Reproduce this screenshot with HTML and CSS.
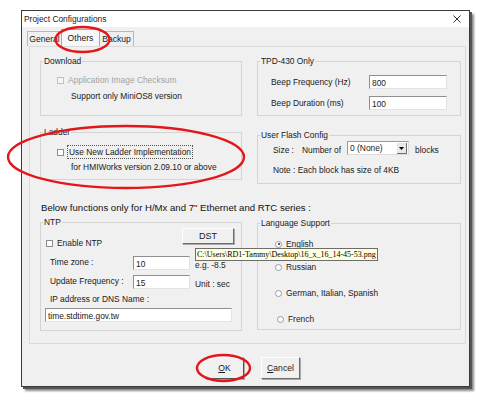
FILE: index.html
```html
<!DOCTYPE html>
<html>
<head>
<link rel="stylesheet" href="styles.css">
</head>
<body>

<div class="window">
    <div class="titlebar">
        <span>Project Configurations</span>
        <svg class="close" width="8" height="8" viewBox="0 0 8 8"><path d="M0.5 0.5 L7.5 7.5 M7.5 0.5 L0.5 7.5" stroke="#333" stroke-width="1"/></svg>
    </div>

    <div class="tabs">
        <div class="tab t-general">General</div>
        <div class="tab t-others active">Others</div>
        <div class="tab t-backup">Backup</div>
    </div>

    <div class="panel">
        <div class="row">
            <fieldset class="group download">
                <legend>Download</legend>
                <div class="check disabled"><span class="box"></span>Application Image Checksum</div>
                <div class="note">Support only MiniOS8 version</div>
            </fieldset>
            <fieldset class="group tpd">
                <legend>TPD-430 Only</legend>
                <div class="field"><span class="lbl">Beep Frequency (Hz)</span><span class="input w78">800</span></div>
                <div class="field second"><span class="lbl">Beep Duration (ms)</span><span class="input w78">100</span></div>
            </fieldset>
        </div>

        <div class="row row2">
            <fieldset class="group ladder">
                <legend>Ladder</legend>
                <div class="check"><span class="box"></span><span class="focus">Use New Ladder Implementation</span></div>
                <div class="note">for HMIWorks version 2.09.10 or above</div>
            </fieldset>
            <fieldset class="group flash">
                <legend>User Flash Config</legend>
                <div class="size-row">
                    <span>Size :</span>
                    <span class="num-of">Number of</span>
                    <span class="select">0 (None)<span class="drop"><svg width="5" height="3" viewBox="0 0 5 3"><path d="M0 0 H5 L2.5 3 Z" fill="#000"/></svg></span></span>
                    <span class="blocks">blocks</span>
                </div>
                <div class="note">Note : Each block has size of 4KB</div>
            </fieldset>
        </div>

        <p class="headline">Below functions only for H/Mx and 7" Ethernet and RTC series :</p>

        <div class="row">
            <fieldset class="group ntp">
                <legend>NTP</legend>
                <div class="ntp-top">
                    <div class="check"><span class="box"></span>Enable NTP</div>
                    <span class="btn dst">DST</span>
                </div>
                <div class="ntp-field"><span class="lbl">Time zone :</span><span class="input w57">10</span><span class="hint">e.g. -8.5</span></div>
                <div class="ntp-field"><span class="lbl">Update Frequency :</span><span class="input w57">15</span><span class="hint">Unit : sec</span></div>
                <div class="ip-label">IP address or DNS Name :</div>
                <span class="input ip">time.stdtime.gov.tw</span>
                <div class="tooltip">C:\Users\RD1-Tammy\Desktop\16_x_16_14-45-53.png</div>
            </fieldset>
            <fieldset class="group lang">
                <legend>Language Support</legend>
                <div class="radio r1"><span class="dot on"></span>English</div>
                <div class="radio r2"><span class="dot"></span>Russian</div>
                <div class="radio r3"><span class="dot"></span>German, Italian, Spanish</div>
                <div class="radio r4"><span class="dot"></span>French</div>
            </fieldset>
        </div>
    </div>

    <div class="buttons">
        <span class="btn ok"><u>O</u>K</span>
        <span class="btn"><u>C</u>ancel</span>
    </div>
</div>

<!-- red marker rings drawn over the dialog -->
<svg class="marks" width="484" height="400" viewBox="0 0 484 400">
    <ellipse cx="82.5" cy="39.5" rx="27" ry="12.5" />
    <ellipse cx="126" cy="157" rx="118" ry="31" />
    <ellipse cx="223.5" cy="368" rx="26.5" ry="13" />
</svg>

</body>
</html>
```

FILE: styles.css
```css
body {
    margin: 0;
    position: relative;
    width: 484px;
    height: 400px;
    background-color: #fff;
    font-family: "Liberation Sans", Arial, sans-serif;
    font-size: 8.4px;
    line-height: 10px;
    color: #1a1a1a;
    overflow: hidden;
}

.window {
    box-sizing: border-box;
    width: 449px;
    height: 377px;
    margin: 10px 0 0 21px;
    border: 1px solid #3a3a3a;
    background-color: #f0f0f0;
    box-shadow: 2px 2px 0 #555, 4px 4px 2px #8a8a8a;
    display: flex;
    flex-direction: column;
}

.titlebar {
    height: 16px;
    background-color: #fff;
    display: flex;
    align-items: center;
    justify-content: space-between;
    padding: 0 8px 0 2px;
}

.tabs {
    display: flex;
    align-items: flex-end;
    height: 19px;
    margin-left: 5px;
}

.tab {
    box-sizing: border-box;
    height: 15px;
    border: 1px solid #b8b8b8;
    border-bottom: none;
    text-align: center;
    line-height: 14px;
    font-size: 8.6px;
}

.t-general { width: 34px; border-right: none; }
.t-others { width: 39px; }
.t-backup { width: 34px; border-left: none; }

.tab.active {
    height: 17px;
    background-color: #f7f7f7;
    line-height: 16px;
    border-color: #a8a8a8;
}

.panel {
    box-sizing: border-box;
    height: 298px;
    margin: 0 3px 0 7px;
    border: 1px solid #dadada;
    padding: 9px 0 0 10px;
}

.row {
    display: grid;
    grid-template-columns: 202px 204px;
    column-gap: 15px;
    align-items: start;
}

.row2 {
    margin-top: 11px;
}

.group {
    box-sizing: border-box;
    margin: 0;
    padding: 0;
    border: 1px solid #d4d4d4;
    min-width: 0;
}

legend {
    margin-left: 2px;
    padding: 0 1px;
    line-height: 10px;
}

.download, .tpd { height: 60px; }
.ladder { height: 53px; }
.flash { height: 54px; margin-top: 3px; }
.ntp { height: 114px; position: relative; }
.lang { height: 112px; margin-top: 1px; }

/* checkboxes and radio buttons */
.check {
    display: flex;
    align-items: center;
    height: 10px;
}

.box {
    box-sizing: border-box;
    width: 7px;
    height: 7px;
    margin-right: 4px;
    background-color: #fff;
    border: 1px solid #8c8c8c;
}

.disabled { color: #a3a3a3; }
.disabled .box { border-color: #c0c0c0; background-color: #f4f4f4; }

.download .check { margin: 9px 0 0 16px; }
.download .note { margin: 6px 0 0 30px; }

.ladder .check { margin: 10px 0 0 16px; }
.ladder .note { margin: 5px 0 0 30px; }

.focus {
    padding: 1px 1px;
    outline: 1px dotted #555;
}

.note { height: 10px; }

/* text boxes */
.input {
    box-sizing: border-box;
    display: inline-block;
    height: 14px;
    padding: 2px 0 0 2px;
    background-color: #fff;
    border: 1px solid #e3e3e3;
    border-top-color: #8f8f8f;
    border-left-color: #8f8f8f;
}

.w78 { width: 78px; }
.w57 { width: 57px; }

.field {
    display: flex;
    align-items: center;
    margin: 9px 0 0 13px;
}

.field.second { margin-top: 7px; }
.field .lbl { width: 98px; }

.size-row {
    display: flex;
    align-items: flex-end;
    margin: 1px 0 0 15px;
}

.num-of { margin-left: 8px; }

.select {
    box-sizing: border-box;
    position: relative;
    width: 62px;
    height: 14px;
    margin-left: 6px;
    padding: 1px 0 0 2px;
    background-color: #fff;
    border: 1px solid #9a9a9a;
    border-right-color: #dcdcdc;
    border-bottom-color: #dcdcdc;
}

.drop {
    position: absolute;
    top: 1px;
    right: 1px;
    width: 9px;
    height: 10px;
    display: flex;
    align-items: center;
    justify-content: center;
    background-color: #e8e8e8;
    border-right: 1px solid #707070;
    border-bottom: 1px solid #707070;
}

.blocks { margin-left: 6px; }
.flash .note { margin: 10px 0 0 15px; }

.headline {
    margin: 18px 0 0 1px;
    height: 12px;
    line-height: 12px;
    font-size: 9.6px;
    color: #111;
}

.headline + .row { margin-top: 3px; }

/* NTP block */
.ntp-top {
    display: flex;
    align-items: flex-start;
    justify-content: space-between;
    margin: 0 7px 0 5px;
}

.ntp-top .check { margin-top: 11px; }

.btn {
    box-sizing: border-box;
    display: inline-flex;
    align-items: center;
    justify-content: center;
    background-color: #f0f0f0;
    border: 1px solid #fff;
    border-right-color: #6d6d6d;
    border-bottom-color: #6d6d6d;
    box-shadow: 1px 1px 0 #a9a9a9;
}

.dst {
    width: 52px;
    height: 16px;
    margin-top: 1px;
    font-size: 9px;
}

.ntp-field {
    display: flex;
    align-items: flex-end;
    margin: 8px 0 0 9px;
}

.ntp-field + .ntp-field { margin-top: 5px; }
.ntp-field .lbl { width: 83px; padding-bottom: 3px; }
.ntp-field .hint { margin-left: 5px; padding-bottom: 0; }

.ip-label { margin: 5px 0 0 9px; }

.ip {
    width: 187px;
    margin: 4px 0 0 4px;
}

.tooltip {
    position: absolute;
    top: 21px;
    left: 154px;
    white-space: nowrap;
    padding: 0 1px;
    height: 11px;
    line-height: 11px;
    font-family: "Liberation Serif", "Times New Roman", serif;
    font-size: 8px;
    color: #000;
    background-color: #ffffe1;
    border: 1px solid #6d6d6d;
}

/* language radios */
.radio {
    display: flex;
    align-items: center;
    height: 10px;
    margin-left: 17px;
}

.r1 { margin-top: 11px; }
.r2 { margin-top: 13px; }
.r3 { margin-top: 16px; }
.r4 { margin-top: 16px; margin-left: 19px; }

.dot {
    box-sizing: border-box;
    position: relative;
    width: 7px;
    height: 7px;
    margin-right: 4px;
    border-radius: 50%;
    background-color: #fff;
    border: 1px solid #9a9a9a;
}

.dot.on::after {
    content: "";
    position: absolute;
    top: 1.5px;
    left: 1.5px;
    width: 2px;
    height: 2px;
    border-radius: 50%;
    background-color: #222;
}

/* dialog buttons */
.buttons {
    display: flex;
    gap: 17px;
    margin: 13px 0 0 183px;
}

.buttons .btn {
    width: 39px;
    height: 22px;
    font-size: 8.6px;
}

.buttons .ok {
    border-color: #f7f7f7 #555 #555 #f7f7f7;
}

.marks {
    position: absolute;
    top: 0;
    left: 0;
    pointer-events: none;
}

.marks ellipse {
    fill: none;
    stroke: #e3171b;
    stroke-width: 2.4;
}
```
